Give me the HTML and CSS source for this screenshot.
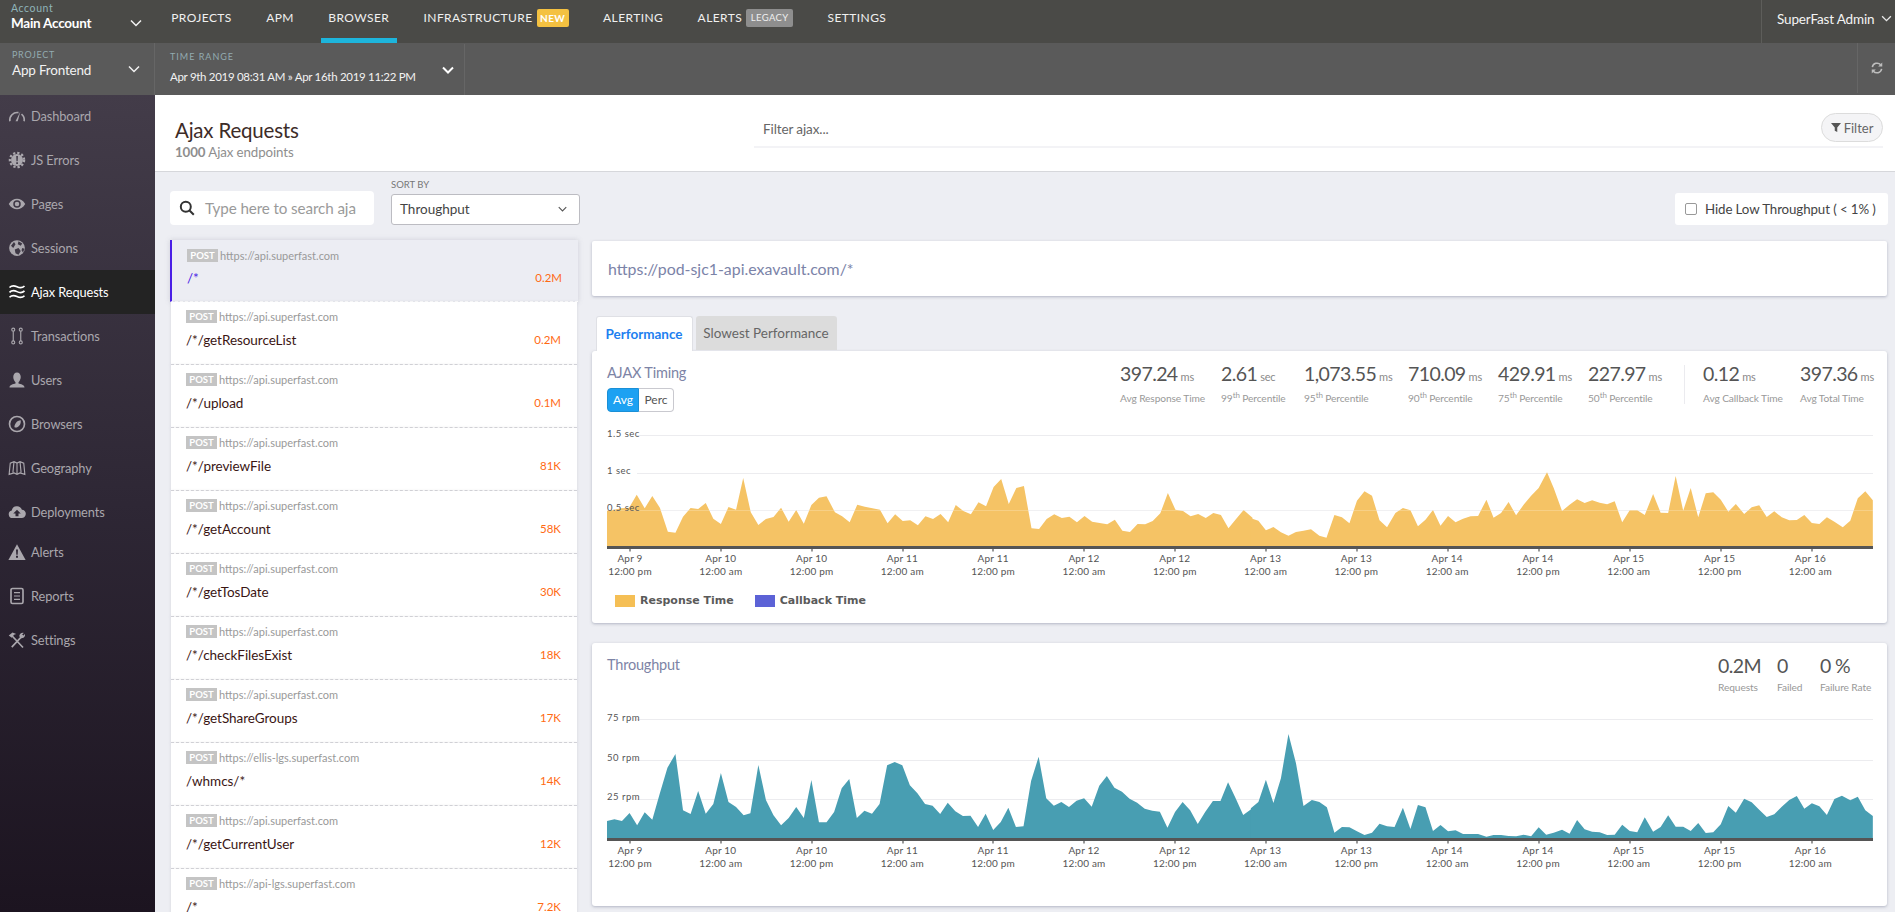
FILE: index.html
```html
<!DOCTYPE html>
<html lang="en">
<head>
<meta charset="utf-8">
<title>Ajax Requests</title>
<link rel="stylesheet" href="styles.css">
</head>
<body>
<header class="topbar">
  <div class="account">
    <div class="account-text"><span class="account-label">Account</span><strong class="account-name">Main Account</strong></div>
    <svg class="chev chev-account" viewBox="0 0 12 8"><path d="M1 1.500l5 5 5-5"/></svg>
  </div>
  <nav class="mainnav">
    <a class="mainnav-item">PROJECTS</a>
    <a class="mainnav-item">APM</a>
    <a class="mainnav-item is-active">BROWSER</a>
    <a class="mainnav-item">INFRASTRUCTURE<span class="badge badge-new">NEW</span></a>
    <a class="mainnav-item">ALERTING</a>
    <a class="mainnav-item">ALERTS<span class="badge badge-legacy">LEGACY</span></a>
    <a class="mainnav-item">SETTINGS</a>
  </nav>
  <div class="user">SuperFast Admin<svg class="chev chev-user" viewBox="0 0 12 8"><path d="M1 1.500l5 5 5-5"/></svg></div>
</header>
<section class="subbar">
  <div class="project">
    <div class="project-text"><span class="sub-label">PROJECT</span><span class="project-name">App Frontend</span></div>
    <svg class="chev chev-project" viewBox="0 0 12 8"><path d="M1 1.500l5 5 5-5"/></svg>
  </div>
  <div class="range">
    <div class="range-text"><span class="sub-label range-label">TIME RANGE</span><span class="range-value">Apr 9th 2019 08:31 AM » Apr 16th 2019 11:22 PM</span></div>
    <svg class="chev chev-range" viewBox="0 0 12 8"><path d="M1 1.500l5 5 5-5"/></svg>
  </div>
  <div class="refresh">
    <svg viewBox="0 0 24 24" class="refresh-icon"><path d="M4 10.500A8.200 8.200 0 0 1 18.300 6.600M20 13.500A8.200 8.200 0 0 1 5.700 17.400"/><path class="fill" d="M21 2.500v7h-7zM3 21.500v-7h7z"/></svg>
  </div>
</section>
<div class="main">
  <aside class="sidebar">
    <a class="side-item"><svg class="side-icon" viewBox="0 0 24 24"><path class="line" d="M2.500 19A10 10 0 0 1 14 7.500"/><path class="line" d="M18 9.500A10 10 0 0 1 21.500 19"/><path class="fill" d="M16.500 6L13 19h-3z"/></svg>Dashboard</a>
    <a class="side-item"><svg class="side-icon" viewBox="0 0 24 24"><circle class="fill" cx="12" cy="12" r="8"/><circle class="teeth" cx="12" cy="12" r="9.500"/><path class="cut" d="M11 6.500h2.200l-.3 7h-1.600zM11 15h2.200v2.400H11z"/></svg>JS Errors</a>
    <a class="side-item"><svg class="side-icon" viewBox="0 0 24 24"><path class="fill" fill-rule="evenodd" d="M1 12c3-5 7-7 11-7s8 2 11 7c-3 5-7 7-11 7s-8-2-11-7zm11-5a5 5 0 1 0 0 10 5 5 0 0 0 0-10z"/><circle class="fill" cx="12" cy="12" r="3"/></svg>Pages</a>
    <a class="side-item"><svg class="side-icon" viewBox="0 0 24 24"><circle class="fill" cx="12" cy="12" r="10.500"/><path class="cut" d="M4 9l4-5 2 3-3 5zM14 3l5 3-2 3-4-2zM9 14l5-2 3 4-3 5-4-2zM19 12l3 1-2 5-2-3z"/></svg>Sessions</a>
    <a class="side-item is-active"><svg class="side-icon" viewBox="0 0 24 24"><path class="line" d="M2 6c3-3 6-3 10-1s7 2 10-1M2 12.500c3-3 6-3 10-1s7 2 10-1M2 19c3-3 6-3 10-1s7 2 10-1"/></svg>Ajax Requests</a>
    <a class="side-item"><svg class="side-icon" viewBox="0 0 24 24"><path class="line-thin" d="M7 5.500v13M17 5.500v13"/><circle class="line-thin" cx="7" cy="3.500" r="2"/><circle class="line-thin" cx="7" cy="20.500" r="2"/><circle class="line-thin" cx="17" cy="3.500" r="2"/><circle class="line-thin" cx="17" cy="20.500" r="2"/></svg>Transactions</a>
    <a class="side-item"><svg class="side-icon" viewBox="0 0 24 24"><path class="fill" d="M12 2c3 0 5 2.500 5 6s-2 6-3 7v1.500c3 1 8 1.500 8 5.500H2c0-4 5-4.500 8-5.500V15c-1-1-3-3.500-3-7s2-6 5-6z"/></svg>Users</a>
    <a class="side-item"><svg class="side-icon" viewBox="0 0 24 24"><circle class="line" cx="12" cy="12" r="10"/><path class="fill" d="M17 7c.5 4-1 7-3.500 8.500-1.500 1-3.500 1.500-4.500 1-1-1.500 0-4 1.500-6C12 8.500 14.500 7 17 7z"/></svg>Browsers</a>
    <a class="side-item"><svg class="side-icon" viewBox="0 0 24 24"><path class="line-thin" d="M1.500 20.500l1.500-15 5-2 4 2 4-2 5 2 1.500 15-6.500-2-4 2-4-2zM8 3.500l-1.500 15M12 5.500v15M16 3.500l1.500 15"/></svg>Geography</a>
    <a class="side-item"><svg class="side-icon" viewBox="0 0 24 24"><path class="fill" fill-rule="evenodd" d="M6 20a5 5 0 0 1-1-9.900A7 7 0 0 1 18.500 9 5.500 5.500 0 0 1 18 20zm6-11l-5 5h3v3.500h4V14h3z"/></svg>Deployments</a>
    <a class="side-item side-item-short"><svg class="side-icon" viewBox="0 0 24 24"><path class="fill" fill-rule="evenodd" d="M12 1.500l11.500 21H.5zM10.700 8.500l.4 7h1.800l.4-7zM10.700 17v2.500h2.600V17z"/></svg>Alerts</a>
    <a class="side-item"><svg class="side-icon" viewBox="0 0 24 24"><rect class="line" x="4" y="2" width="16" height="20" rx="2"/><path class="line-thin" d="M8 7.500h8M8 12h8M8 16.500h8"/></svg>Reports</a>
    <a class="side-item"><svg class="side-icon" viewBox="0 0 24 24"><path class="line" d="M4 5l16 17M20 5.500L5 21.500"/><path class="fill" d="M1 6l5-4 5 2-3 1-3 4zM15 7c0-3 3-5.500 6-4.500l-2.500 2.500 1.500 1.500 2.500-2.500c1 3-1.500 6-5 5.500z"/></svg>Settings</a>
  </aside>
  <main class="content">
    <div class="page-head">
      <div class="page-title">
        <h1>Ajax Requests</h1>
        <p><b>1000</b> Ajax endpoints</p>
      </div>
      <div class="filterbar">
        <span class="filter-text">Filter ajax...</span>
        <button class="filter-btn"><svg viewBox="0 0 12 12" class="funnel"><path d="M0 .5h12L7.500 6v5.500l-3-1.500V6z"/></svg>Filter</button>
      </div>
    </div>
    <div class="controls">
      <div class="search">
        <svg viewBox="0 0 16 16" class="search-icon"><circle cx="6.800" cy="6.800" r="5"/><path d="M10.500 10.500l4.300 4.300"/></svg>
        <span>Type here to search aja</span>
      </div>
      <div class="sort">
        <span class="sort-label">SORT BY</span>
        <div class="select">Throughput<svg class="chev chev-select" viewBox="0 0 12 8"><path d="M1 1.500l5 5 5-5"/></svg></div>
      </div>
      <label class="hide-low"><span class="checkbox"></span>Hide Low Throughput ( &lt; 1% )</label>
    </div>
    <div class="workspace">
      <ul class="endpoints">
        <li class="endpoint is-selected"><div class="endpoint-meta"><span class="method">POST</span>https://api.superfast.com</div><div class="endpoint-row"><span class="endpoint-path">/*</span><span class="endpoint-count">0.2M</span></div></li>
        <li class="endpoint"><div class="endpoint-meta"><span class="method">POST</span>https://api.superfast.com</div><div class="endpoint-row"><span class="endpoint-path">/*/getResourceList</span><span class="endpoint-count">0.2M</span></div></li>
        <li class="endpoint"><div class="endpoint-meta"><span class="method">POST</span>https://api.superfast.com</div><div class="endpoint-row"><span class="endpoint-path">/*/upload</span><span class="endpoint-count">0.1M</span></div></li>
        <li class="endpoint"><div class="endpoint-meta"><span class="method">POST</span>https://api.superfast.com</div><div class="endpoint-row"><span class="endpoint-path">/*/previewFile</span><span class="endpoint-count">81K</span></div></li>
        <li class="endpoint"><div class="endpoint-meta"><span class="method">POST</span>https://api.superfast.com</div><div class="endpoint-row"><span class="endpoint-path">/*/getAccount</span><span class="endpoint-count">58K</span></div></li>
        <li class="endpoint"><div class="endpoint-meta"><span class="method">POST</span>https://api.superfast.com</div><div class="endpoint-row"><span class="endpoint-path">/*/getTosDate</span><span class="endpoint-count">30K</span></div></li>
        <li class="endpoint"><div class="endpoint-meta"><span class="method">POST</span>https://api.superfast.com</div><div class="endpoint-row"><span class="endpoint-path">/*/checkFilesExist</span><span class="endpoint-count">18K</span></div></li>
        <li class="endpoint"><div class="endpoint-meta"><span class="method">POST</span>https://api.superfast.com</div><div class="endpoint-row"><span class="endpoint-path">/*/getShareGroups</span><span class="endpoint-count">17K</span></div></li>
        <li class="endpoint"><div class="endpoint-meta"><span class="method">POST</span>https://ellis-lgs.superfast.com</div><div class="endpoint-row"><span class="endpoint-path">/whmcs/*</span><span class="endpoint-count">14K</span></div></li>
        <li class="endpoint"><div class="endpoint-meta"><span class="method">POST</span>https://api.superfast.com</div><div class="endpoint-row"><span class="endpoint-path">/*/getCurrentUser</span><span class="endpoint-count">12K</span></div></li>
        <li class="endpoint"><div class="endpoint-meta"><span class="method">POST</span>https://api-lgs.superfast.com</div><div class="endpoint-row"><span class="endpoint-path">/*</span><span class="endpoint-count">7.2K</span></div></li>
      </ul>
      <div class="detail">
        <div class="url-card">https://pod-sjc1-api.exavault.com/*</div>
        <div class="tabs"><span class="tab is-current">Performance</span><span class="tab">Slowest Performance</span></div>
        <section class="card card-timing">
          <div class="card-head head-timing">
            <div>
              <h2 class="card-title">AJAX Timing</h2>
              <div class="toggle"><span class="toggle-on">Avg</span><span class="toggle-off">Perc</span></div>
            </div>
            <div class="stats stats-timing">
              <div class="stat"><div class="stat-value">397.24<small>ms</small></div><div class="stat-label">Avg Response Time</div></div>
              <div class="stat"><div class="stat-value">2.61<small>sec</small></div><div class="stat-label">99<sup>th</sup> Percentile</div></div>
              <div class="stat"><div class="stat-value">1,073.55<small>ms</small></div><div class="stat-label">95<sup>th</sup> Percentile</div></div>
              <div class="stat"><div class="stat-value">710.09<small>ms</small></div><div class="stat-label">90<sup>th</sup> Percentile</div></div>
              <div class="stat"><div class="stat-value">429.91<small>ms</small></div><div class="stat-label">75<sup>th</sup> Percentile</div></div>
              <div class="stat"><div class="stat-value">227.97<small>ms</small></div><div class="stat-label">50<sup>th</sup> Percentile</div></div>
              <div class="stat stat-divided"><div class="stat-value">0.12<small>ms</small></div><div class="stat-label">Avg Callback Time</div></div>
              <div class="stat"><div class="stat-value">397.36<small>ms</small></div><div class="stat-label">Avg Total Time</div></div>
            </div>
          </div>
          <svg class="plot plot-timing" viewBox="0 0 1266 128.500">
            <path class="grid" d="M30 11.500H1266M30 49.500H1266M30 86.500H1266"/>
            <g transform="translate(-17 -185) scale(.42088 .33333)">
              <polygon class="area-amber" points="40,921 40,815 57,812 75,808 93,806 111,767 130,808 148,771 166,806 185,878 203,881 221,833 239,807 257,810 275,792 293,839 311,855 329,804 347,812 364,717 382,820 400,858 418,840 436,834 454,806 472,848 490,813 508,854 526,798 544,776 562,772 582,820 599,832 617,850 635,797 653,803 671,808 689,812 707,853 725,826 743,846 761,844 779,859 797,832 815,840 833,825 851,850 869,798 887,816 905,826 923,790 941,802 959,744 977,720 995,795 1013,747 1031,741 1049,868 1067,870 1085,840 1103,826 1121,837 1139,833 1157,850 1175,831 1193,848 1211,852 1229,856 1247,842 1265,875 1283,879 1301,855 1319,856 1337,846 1355,823 1373,762 1391,812 1409,816 1427,832 1445,825 1463,837 1481,822 1499,828 1517,868 1535,840 1553,813 1574,836 1574,921"/>
            </g>
            <g transform="translate(633 -85) scale(.41771 .33333)">
              <polygon class="area-amber" points="26,621 26,538 44,545 62,574 80,564 98,580 116,590 134,579 152,575 170,571 190,590 207,596 226,528 244,535 262,553 280,485 298,457 316,470 334,544 352,565 372,522 390,507 408,514 426,562 444,542 462,513 480,560 498,531 516,550 534,539 552,532 570,531 590,482 607,536 625,522 643,489 661,529 679,497 697,470 715,447 735,400 751,447 771,516 789,497 807,481 825,492 843,484 861,491 879,496 897,487 915,550 933,514 951,514 969,528 989,465 1007,521 1025,522 1043,411 1061,515 1079,447 1097,535 1115,463 1133,460 1151,482 1169,518 1187,495 1207,525 1225,505 1243,499 1261,534 1279,517 1297,535 1315,544 1333,543 1351,528 1369,552 1387,555 1405,535 1423,548 1443,565 1461,545 1479,478 1497,457 1515,484 1515,621"/>
            </g>
            <path class="grid-over" d="M0 86.500H1266"/>
            <rect class="baseline" x="0" y="122" width="1266" height="3"/>
            <path class="ticks" d="M23 125v2.500M114 125v2.500M205 125v2.500M296 125v2.500M386 125v2.500M477 125v2.500M568 125v2.500M659 125v2.500M750 125v2.500M841 125v2.500M932 125v2.500M1023 125v2.500M1114 125v2.500M1205 125v2.500"/>
            <text class="ylabel" x="0" y="12.500">1.5 sec</text>
            <text class="ylabel" x="0" y="49.500">1 sec</text>
            <text class="ylabel" x="0" y="86.500">0.5 sec</text>
          </svg>
          <div class="axis">
            <span>Apr 9<br>12:00 pm</span><span>Apr 10<br>12:00 am</span><span>Apr 10<br>12:00 pm</span><span>Apr 11<br>12:00 am</span><span>Apr 11<br>12:00 pm</span><span>Apr 12<br>12:00 am</span><span>Apr 12<br>12:00 pm</span><span>Apr 13<br>12:00 am</span><span>Apr 13<br>12:00 pm</span><span>Apr 14<br>12:00 am</span><span>Apr 14<br>12:00 pm</span><span>Apr 15<br>12:00 am</span><span>Apr 15<br>12:00 pm</span><span>Apr 16<br>12:00 am</span>
          </div>
          <div class="legend">
            <span class="legend-item"><i class="swatch swatch-amber"></i>Response Time</span>
            <span class="legend-item"><i class="swatch swatch-indigo"></i>Callback Time</span>
          </div>
        </section>
        <section class="card card-throughput">
          <div class="card-head head-throughput">
            <h2 class="card-title">Throughput</h2>
            <div class="stats stats-throughput">
              <div class="stat"><div class="stat-value">0.2M</div><div class="stat-label">Requests</div></div>
              <div class="stat"><div class="stat-value">0</div><div class="stat-label">Failed</div></div>
              <div class="stat"><div class="stat-value">0 %</div><div class="stat-label">Failure Rate</div></div>
            </div>
          </div>
          <svg class="plot plot-throughput" viewBox="0 0 1266 139.500">
            <path class="grid" d="M30 14.500H1266M30 55.500H1266M30 94.500H1266"/>
            <g transform="translate(-17 -75) scale(.42088 .33333)">
              <polygon class="area-teal" points="40,624 40,573 58,568 76,573 94,549 112,586 130,547 148,569 166,490 184,413 203,372 221,541 239,552 257,483 275,551 293,522 311,429 329,516 347,531 365,556 381,550 400,405 418,510 436,556 454,586 472,564 490,531 508,564 526,450 544,577 562,577 580,546 598,475 616,447 634,564 652,542 670,551 688,522 706,406 724,396 742,406 760,466 778,490 796,522 814,527 832,552 850,518 868,544 886,558 904,557 922,591 940,551 958,600 976,576 994,533 1012,591 1030,589 1048,453 1066,380 1084,505 1102,527 1120,516 1138,531 1156,512 1174,505 1192,530 1210,467 1228,438 1246,473 1264,485 1282,506 1300,518 1318,536 1336,542 1354,545 1372,593 1390,546 1408,516 1426,541 1444,582 1462,545 1480,513 1498,513 1516,457 1534,505 1552,555 1574,535 1574,624"/>
            </g>
            <g transform="translate(633 -75) scale(.41771 .33333)">
              <polygon class="area-teal" points="26,624 26,535 44,516 62,449 80,519 98,445 116,312 134,400 152,528 172,510 190,516 208,532 226,608 244,591 262,592 280,604 298,615 316,608 334,581 352,589 370,591 390,533 408,597 426,525 444,532 462,603 480,585 498,604 516,601 534,612 552,612 570,612 590,620 607,615 625,615 643,618 661,619 679,614 697,619 715,592 733,614 751,608 771,599 789,611 807,570 825,598 843,605 861,607 879,615 897,614 915,584 933,603 951,607 969,562 989,605 1007,591 1025,556 1043,590 1061,590 1079,603 1097,579 1115,609 1133,607 1151,583 1169,528 1187,548 1207,506 1225,517 1243,539 1261,561 1279,553 1297,530 1315,510 1333,498 1351,536 1369,520 1387,529 1405,555 1423,507 1441,497 1461,511 1479,500 1497,541 1515,558 1515,624"/>
            </g>
            <rect class="baseline" x="0" y="133" width="1266" height="3"/>
            <path class="ticks" d="M23 136v2.500M114 136v2.500M205 136v2.500M296 136v2.500M386 136v2.500M477 136v2.500M568 136v2.500M659 136v2.500M750 136v2.500M841 136v2.500M932 136v2.500M1023 136v2.500M1114 136v2.500M1205 136v2.500"/>
            <text class="ylabel" x="0" y="15.500">75 rpm</text>
            <text class="ylabel" x="0" y="55.500">50 rpm</text>
            <text class="ylabel" x="0" y="94.500">25 rpm</text>
          </svg>
          <div class="axis">
            <span>Apr 9<br>12:00 pm</span><span>Apr 10<br>12:00 am</span><span>Apr 10<br>12:00 pm</span><span>Apr 11<br>12:00 am</span><span>Apr 11<br>12:00 pm</span><span>Apr 12<br>12:00 am</span><span>Apr 12<br>12:00 pm</span><span>Apr 13<br>12:00 am</span><span>Apr 13<br>12:00 pm</span><span>Apr 14<br>12:00 am</span><span>Apr 14<br>12:00 pm</span><span>Apr 15<br>12:00 am</span><span>Apr 15<br>12:00 pm</span><span>Apr 16<br>12:00 am</span>
          </div>
        </section>
      </div>
    </div>
  </main>
</div>
</body>
</html>
```

FILE: styles.css
```css
* { box-sizing: border-box; }
html, body { margin: 0; height: 912px; overflow: hidden; }
body { font-family: Lato, "Noto Sans", sans-serif; background: #edeef3; color: #333; }
a { text-decoration: none; color: inherit; }
ul { list-style: none; margin: 0; padding: 0; }
h1, h2, p { margin: 0; font-weight: 400; }

.chev { fill: none; stroke: currentColor; stroke-width: 1.5; flex: none; }
.chev-account { width: 12px; height: 8px; color: #f2f2f2; margin-top: 13px; }
.chev-project { width: 12px; height: 8px; color: #f2f2f2; margin-top: 10px; }
.chev-range { width: 12px; height: 8px; color: #fff; stroke-width: 2; margin-top: 3px; }
.chev-user { width: 11px; height: 7px; margin-left: 7px; color: #e8e8e8; }
.chev-select { width: 9px; height: 6px; color: #555; }

/* top bar */
.topbar { display: flex; height: 43px; background: #4a4a47; color: #f4f4f4; }
.account { width: 154px; padding: 0 12px 10px 11px; display: flex; align-items: center; justify-content: space-between; }
.account-text { display: flex; flex-direction: column; }
.account-label { font-size: 10.500px; line-height: 12px; color: #8fb4b9; letter-spacing: .6px; margin-top: 1px; }
.account-name { font-size: 13.500px; line-height: 18px; font-weight: 700; letter-spacing: -.25px; color: #fff; }
.mainnav { display: flex; flex: 1; }
.mainnav-item { display: flex; align-items: center; margin: 0 9.700px; padding: 0 7.500px 3px; font-size: 12px; letter-spacing: .42px; border-bottom: 5px solid transparent; color: #f0f0f0; }
.mainnav-item.is-active { border-bottom-color: #1db5dc; }
.badge { margin-left: 4px; height: 18px; line-height: 18px; border-radius: 2px; font-size: 10px; letter-spacing: .4px; text-align: center; }
.badge-new { width: 32px; background: #f4c141; color: #fff; font-weight: 700; }
.badge-legacy { width: 47px; background: #8e8e8e; color: #eee; font-size: 9.500px; }
.user { width: 134px; border-left: 1px solid #5d5d5a; padding-left: 15px; display: flex; align-items: center; font-size: 13.500px; letter-spacing: -.15px; padding-bottom: 6px; white-space: nowrap; }

/* sub bar */
.subbar { display: flex; height: 52px; background: #5a5a5a; color: #f2f2f2; }
.project { width: 155px; padding: 0 14px 10px 12px; border-right: 1px solid #666; display: flex; align-items: center; justify-content: space-between; }
.project-text, .range-text { display: flex; flex-direction: column; }
.sub-label { font-size: 9px; letter-spacing: .7px; color: #93abb0; line-height: 12px; }
.project-name { font-size: 13.500px; line-height: 18px; letter-spacing: -.2px; }
.range { width: 310px; padding: 0 10px 3px 15px; border-right: 1px solid #666; display: flex; align-items: center; justify-content: space-between; margin-top: 1px; }
.range-label { letter-spacing: 1px; }
.range-value { font-size: 11.500px; line-height: 17px; margin-top: 5px; letter-spacing: -.3px; white-space: nowrap; }
.refresh { margin-left: auto; width: 38px; border-left: 1px solid #666; margin-bottom: 2px; display: flex; align-items: center; justify-content: center; }
.refresh-icon { width: 14px; height: 14px; fill: none; stroke: #bdbdbd; stroke-width: 2.600; }
.refresh-icon .fill { fill: #bdbdbd; stroke: none; }

/* main frame */
.main { display: flex; height: 817px; }
.sidebar { width: 155px; flex: none; background: linear-gradient(#433c49 0, #2e2735 50%, #1c1420 100%); }
.side-item { display: flex; align-items: center; height: 44px; font-size: 12.800px; color: #aaa7ad; letter-spacing: -.1px; position: relative; top: -1px; }
.side-item-short { height: 40px; padding-bottom: 4px; }
.side-item.is-active { background: #232323; color: #fff; }
.side-icon { width: 18px; height: 18px; margin: 0 5px 0 8px; flex: none; }
.side-icon .fill { fill: currentColor; }
.side-icon .line { fill: none; stroke: currentColor; stroke-width: 2.200; }
.side-icon .line-thin { fill: none; stroke: currentColor; stroke-width: 1.500; }
.side-icon .teeth { fill: none; stroke: currentColor; stroke-width: 3; stroke-dasharray: 3 2.600; }
.side-icon .cut { fill: #3e3845; }

.content { flex: 1; min-width: 0; display: flex; flex-direction: column; }
.page-head { display: flex; height: 79px; background: #fff; border-bottom: 1px solid #d6d7db; }
.page-title { width: 599px; padding: 23px 0 0 20px; }
.page-title h1 { font-size: 20.500px; line-height: 24px; color: #3d2c28; letter-spacing: -.2px; }
.page-title p { font-size: 13.300px; line-height: 18px; margin-top: 1px; color: #8e8e8e; letter-spacing: -.1px; }
.filterbar { flex: 1; margin: 18px 12px 23px 0; padding-left: 9px; border-bottom: 2px solid #f3f3f6; display: flex; justify-content: space-between; align-items: flex-start; }
.filter-text { font-size: 13.500px; line-height: 32px; color: #666; margin-top: 0; letter-spacing: -.1px; }
.filter-btn { font: inherit; font-size: 13px; width: 62px; height: 29px; border: 1px solid #dcdcdc; border-radius: 15px; background: #f4f4f6; color: #666; padding: 0; display: flex; align-items: center; justify-content: center; }
.funnel { width: 10px; height: 11px; fill: #555; margin-right: 3px; }

.controls { display: flex; height: 68px; flex: none; padding-left: 15px; padding-right: 7px; }
.search { width: 204px; height: 34px; margin-top: 19px; background: #fff; border-radius: 4px; display: flex; align-items: center; font-size: 15.200px; color: #9a9a9a; overflow: hidden; white-space: nowrap; letter-spacing: -.1px; }
.search-icon { width: 16px; height: 16px; margin: 0 10px 0 9px; flex: none; fill: none; stroke: #333; stroke-width: 2; }
.sort { width: 189px; margin-left: 17px; }
.sort-label { display: block; font-size: 9.500px; line-height: 12px; margin-top: 7px; color: #777; }
.select { height: 31px; margin-top: 3px; background: #fff; border: 1px solid #bcbcc2; border-radius: 3px; padding: 0 12px 0 8px; font-size: 13.500px; color: #444; display: flex; align-items: center; justify-content: space-between; }
.hide-low { margin-left: auto; width: 213px; height: 32px; margin-top: 21px; background: #fff; border-radius: 3px; display: flex; align-items: center; padding-left: 10px; font-size: 13.300px; color: #444; white-space: nowrap; letter-spacing: -.1px; }
.checkbox { width: 12px; height: 12px; margin-right: 8px; border: 1px solid #999; border-radius: 2px; background: #fff; flex: none; }

.workspace { display: flex; gap: 12px; padding-left: 15px; padding-right: 8px; min-height: 0; }
.endpoints { width: 410px; flex: none; padding-right: 3px; }
.endpoint { height: 63px; margin-left: 1px; padding: 8px 16px 0 15px; background: #fff; border-bottom: 1px dashed #d8d8dc; box-shadow: 0 0 3px rgba(120,120,140,.2); }
.endpoint.is-selected { height: 62px; margin-left: 0; margin-right: -1px; padding-left: 15px; padding-top: 9px; border-left: 2px solid #4a1fe6; background: #ecedf3; border-bottom-color: #fff; box-shadow: 0 0 5px rgba(120,120,140,.25); }
.endpoint-meta { display: flex; align-items: center; font-size: 11px; line-height: 13px; color: #999; }
.method { width: 31px; height: 13px; margin-right: 2px; background: #c4c4c4; color: #fff; font-size: 9.500px; font-weight: 700; text-align: center; }
.endpoint-row { display: flex; justify-content: space-between; align-items: center; margin-top: 8px; }
.is-selected .endpoint-row { margin-top: 7px; }
.endpoint-path { font-size: 13.500px; line-height: 18px; color: #3a1513; letter-spacing: -.05px; }
.is-selected .endpoint-path { color: #4a1fe6; }
.endpoint-count { font-size: 11.500px; color: #ff6a13; }

.detail { flex: 1; min-width: 0; padding-top: 1px; }
.url-card { height: 55px; background: #fff; border-radius: 2px; box-shadow: 0 1px 3px rgba(120,125,150,.5); padding-left: 16px; display: flex; align-items: center; font-size: 15.900px; color: #7b83a8; }
.tabs { display: flex; height: 35px; margin-top: 20px; padding-left: 3.500px; gap: 3px; }
.tab { display: flex; align-items: center; justify-content: center; width: 141px; height: 34px; background: #dcdcdc; color: #666; font-size: 13.500px; border-radius: 3px 3px 0 0; }
.tab.is-current { width: 97px; height: 35px; background: #fff; color: #1e7ff0; font-weight: 700; font-size: 13.500px; border: 1px solid #dfe0e5; border-bottom: 0; }

.card { background: #fff; border-radius: 3px; box-shadow: 0 1px 3px rgba(120,125,150,.5); padding: 0 14px 0 15px; }
.card-timing { height: 272px; }
.card-throughput { height: 263px; margin-top: 20px; }
.card-head { display: flex; justify-content: space-between; padding-top: 12px; }
.head-timing { height: 73px; }
.head-throughput { height: 62px; padding-top: 12px; }
.card-title { font-size: 14.500px; line-height: 20px; color: #7d84a6; letter-spacing: -.2px; }
.toggle { display: flex; width: 67px; height: 24px; margin-top: 5px; font-size: 12px; line-height: 22px; text-align: center; }
.toggle-on { width: 32px; background: #1da1f2; border: 1px solid #1a8fd6; color: #fff; border-radius: 4px 0 0 4px; }
.toggle-off { width: 35px; background: #fff; border: 1px solid #c9c9cf; border-left: 0; border-radius: 0 4px 4px 0; color: #555; }

.stats { display: grid; align-content: start; }
.stats-timing { grid-template-columns: 101px 83px 104px 90px 90px 96px 116px 73px; }
.stats-throughput { grid-template-columns: 59px 43px 53px; }
.stat-value { font-size: 19.500px; line-height: 22px; color: #555; letter-spacing: -.6px; white-space: nowrap; }
.stat-value small { font-size: 11px; color: #8a8a8a; margin-left: 3px; letter-spacing: -.2px; }
.stat-label { font-size: 10.200px; line-height: 14px; margin-top: 3px; color: #999; white-space: nowrap; letter-spacing: -.1px; }
.stat-label sup { font-size: 8px; line-height: 0; }
.stat-divided { border-left: 1px solid #ebebef; padding-left: 18px; margin-top: 2px; height: 39px; }
.stat-divided .stat-value { margin-top: -2px; }

.plot { display: block; width: 1266px; }
.plot-timing { height: 128.500px; }
.plot-throughput { height: 139.500px; }
.grid { fill: none; stroke: #ececef; stroke-width: 1; }
.grid-over { fill: none; stroke: rgba(255,255,255,.22); stroke-width: 1; }
.area-amber { fill: #f5c365; }
.area-teal { fill: #489eb2; }
.baseline { fill: #555; }
.ticks { fill: none; stroke: #555; stroke-width: 1.200; }
.ylabel { font-family: Lato, sans-serif; font-size: 9.500px; letter-spacing: .5px; fill: #555; }

.axis { display: grid; grid-template-columns: repeat(14, 90.800px); margin-left: -22.400px; font-size: 10px; line-height: 13px; letter-spacing: .2px; color: #555; text-align: center; width: 1290px; }
.legend { display: flex; gap: 21px; margin: 16.500px 0 0 8px; font-family: "DejaVu Sans", sans-serif; font-size: 11px; font-weight: 700; color: #5a5a5a; line-height: 12px; }
.legend-item { display: flex; align-items: center; }
.swatch { width: 20px; height: 12px; margin-right: 5px; }
.swatch-amber { background: #f5bf55; }
.swatch-indigo { background: #5c62d6; }
```
